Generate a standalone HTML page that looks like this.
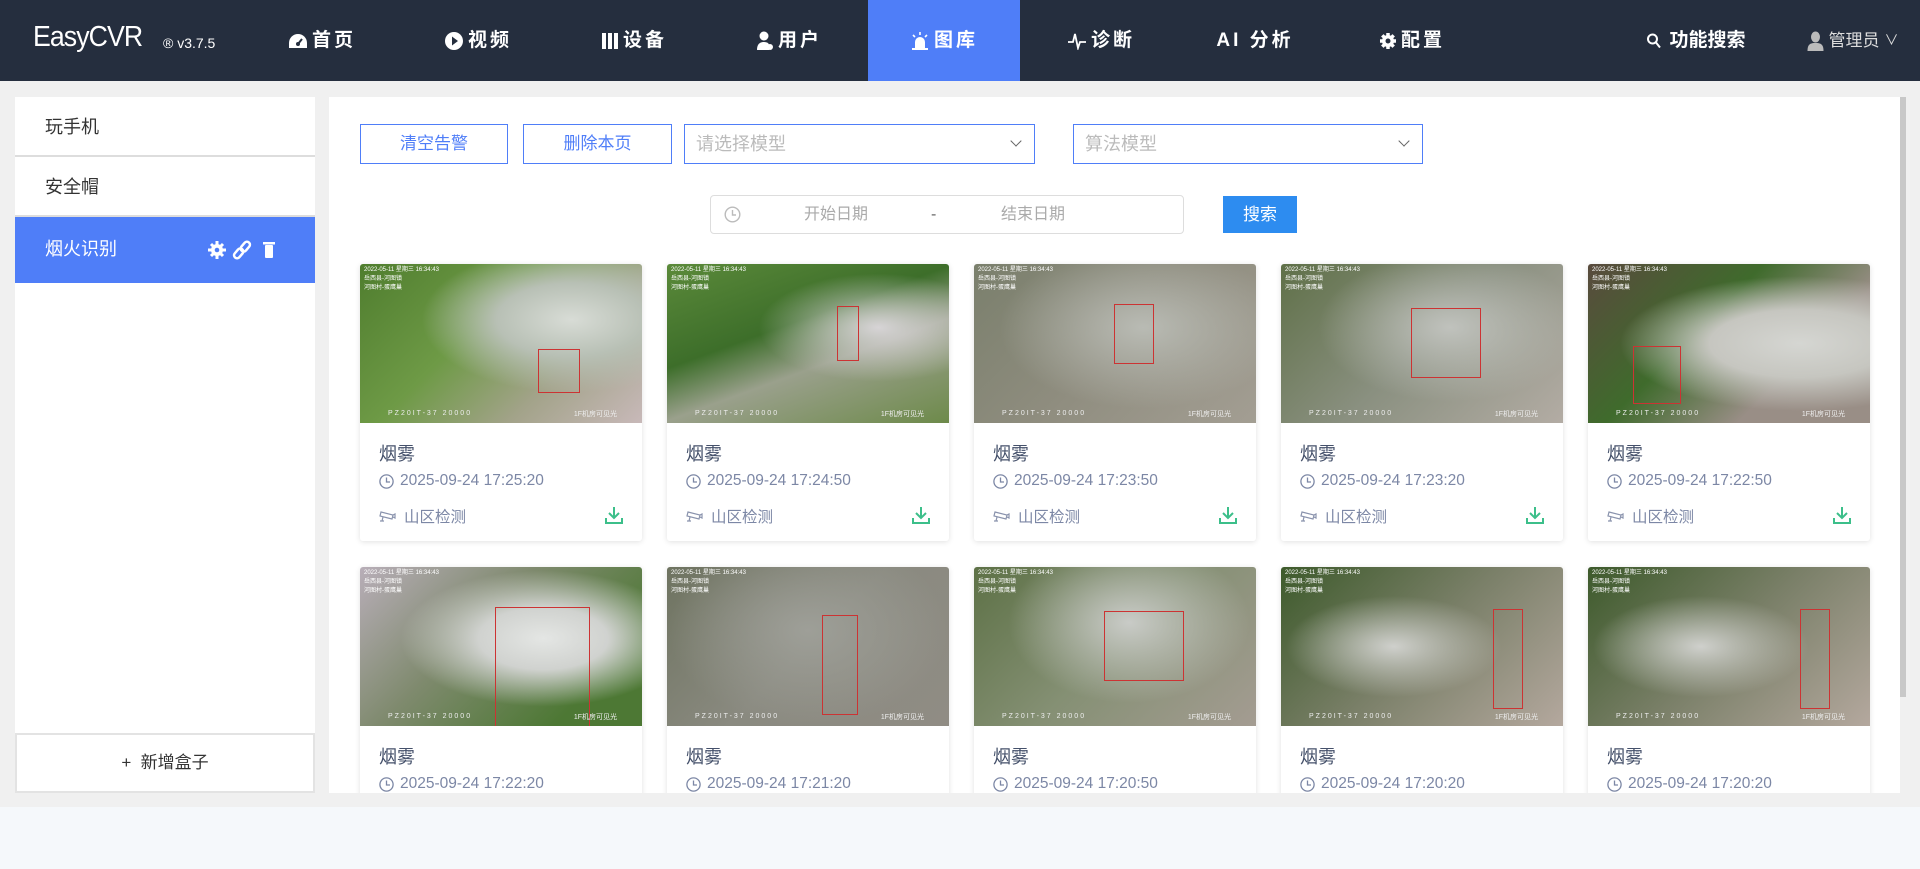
<!DOCTYPE html>
<html><head><meta charset="utf-8"><style>
*{margin:0;padding:0;box-sizing:border-box}
body{width:1920px;height:869px;overflow:hidden;background:#f5f8fb;font-family:"Liberation Sans","Noto Sans CJK SC",sans-serif;position:relative}
.hd{position:absolute;left:0;top:0;width:1920px;height:81px;background:#252e3e;color:#fff}
.logo{position:absolute;left:33px;top:21px;font-size:29px;letter-spacing:-1px;transform:scaleX(.92);transform-origin:left}
.ver{position:absolute;left:163px;top:35px;font-size:14px}
.nav{position:absolute;top:0;height:81px;line-height:81px;font-size:19px;font-weight:bold;letter-spacing:3px;transform:translateX(-50%);white-space:nowrap;display:flex;align-items:center;gap:4px}
.nav svg{display:block}
.act{position:absolute;left:868px;top:0;width:152px;height:81px;background:#4f7ef8}
.gray{position:absolute;left:0;top:81px;width:1920px;height:726px;background:#f0f0f0}
.side{position:absolute;left:15px;top:97px;width:300px;height:696px;background:#fff}
.it{height:60px;line-height:60px;padding-left:30px;font-size:18px;color:#333;border-bottom:2px solid #ddd}
.it.on{background:#4f7ef8;color:#fff;height:66px;line-height:64px;border-bottom:none;position:relative}
.add{position:absolute;left:0;bottom:0;width:300px;height:60px;border:2px solid #e3e3e3;text-align:center;line-height:56px;font-size:17px;color:#333}
.main{position:absolute;left:329px;top:97px;width:1571px;height:696px;background:#fff;overflow:hidden}
.sb{position:absolute;left:1900px;top:97px;width:6px;height:600px;background:#c8c8c8}
.btn{position:absolute;top:27px;height:40px;border:1px solid #4f7ef8;color:#4f7ef8;font-size:17px;text-align:center;line-height:38px}
.sel{position:absolute;top:27px;height:40px;border:1px solid #4f7ef8;color:#bbb;font-size:18px;line-height:38px;padding-left:11px}
.sel:after{content:"";position:absolute;right:14px;top:12px;width:7px;height:7px;border-right:1.5px solid #666;border-bottom:1.5px solid #666;transform:rotate(45deg)}
.date{position:absolute;left:381px;top:98px;width:474px;height:39px;border:1px solid #ddd;border-radius:4px;color:#aaa;font-size:16px;line-height:37px}
.srch{position:absolute;left:894px;top:99px;width:74px;height:37px;background:#2d8cf0;color:#fff;font-size:17px;text-align:center;line-height:37px}
.card{position:absolute;width:282px;height:277px;background:#fff;box-shadow:0 1px 6px rgba(0,0,0,.12);border-radius:3px;overflow:hidden}
.img{height:159px;position:relative;overflow:hidden}
.img .box{position:absolute;border:1px solid #c33}
.img .t{position:absolute;left:4px;top:2px;font-size:6px;color:#fff;line-height:9px}
.img .b{position:absolute;left:28px;bottom:6px;font-size:7px;color:#eee;letter-spacing:2px}
.img .r{position:absolute;right:25px;bottom:4px;font-size:7px;color:#eee}
.ttl{position:absolute;left:19px;top:176px;font-size:18px;color:#44506a}
.tm{position:absolute;left:19px;top:208px;font-size:15.5px;color:#7c87a5;display:flex;align-items:center;gap:6px}
.ar{position:absolute;left:19px;top:241px;font-size:15.5px;color:#7c87a5;display:flex;align-items:center;gap:8px}
.dl{position:absolute;right:18px;top:241px}
</style></head><body>
<div class="hd">
<div class="logo">EasyCVR</div><div class="ver">® v3.7.5</div>
<div class="act"></div>
<div class="nav" style="left:322px"><svg width="20" height="16" viewBox="0 0 20 16"><path d="M10 1a9 9 0 0 0-9 9v5h18v-5a9 9 0 0 0-9-9z" fill="#fff"/><path d="M10 11l4-5" stroke="#252e3e" stroke-width="2"/><circle cx="10" cy="11" r="2" fill="#252e3e"/></svg>首页</div>
<div class="nav" style="left:478px"><svg width="20" height="20" viewBox="0 0 20 20"><circle cx="10" cy="10" r="9" fill="#fff"/><path d="M8 5.5l6 4.5-6 4.5z" fill="#252e3e"/></svg>视频</div>
<div class="nav" style="left:634px"><svg width="18" height="18" viewBox="0 0 18 18" fill="#fff"><rect x="1" y="1" width="4" height="16"/><rect x="7" y="1" width="4" height="16"/><rect x="13" y="1" width="4" height="16"/></svg>设备</div>
<div class="nav" style="left:789px"><svg width="18" height="20" viewBox="0 0 18 20" fill="#fff"><circle cx="8" cy="5" r="4.5"/><path d="M1 19c0-6 3-8 7-8s5 2 5 3v5z"/><circle cx="14" cy="16" r="3"/></svg>用户</div>
<div class="nav" style="left:944px"><svg width="20" height="20" viewBox="0 0 20 20" fill="#fff"><path d="M5 18v-7a5 5 0 0 1 10 0v7z"/><rect x="2" y="17" width="16" height="2"/><path d="M10 1v3M3 4l2 2M17 4l-2 2" stroke="#fff" stroke-width="1.6"/></svg>图库</div>
<div class="nav" style="left:1101px"><svg width="20" height="18" viewBox="0 0 20 18" fill="none" stroke="#fff" stroke-width="1.8"><path d="M1 10h5l2-8 3 14 2-6h6"/></svg>诊断</div>
<div class="nav" style="left:1255px">AI 分析</div>
<div class="nav" style="left:1412px"><svg width="18" height="18" viewBox="0 0 18 18"><g stroke="#fff" stroke-width="3.5"><line x1="9" y1="1" x2="9" y2="17"/><line x1="1" y1="9" x2="17" y2="9"/><line x1="3.3" y1="3.3" x2="14.7" y2="14.7"/><line x1="14.7" y1="3.3" x2="3.3" y2="14.7"/></g><circle cx="9" cy="9" r="6" fill="#fff"/><circle cx="9" cy="9" r="2.5" fill="#252e3e"/></svg>配置</div>
<div class="nav" style="left:1696px;letter-spacing:0;gap:8px"><svg width="15" height="16" viewBox="0 0 15 16" fill="none" stroke="#fff" stroke-width="2"><circle cx="6" cy="6" r="4.5"/><path d="M9.5 9.5l4 5"/></svg>功能搜索</div>
<div class="nav" style="left:1853px;font-weight:normal;font-size:17px;letter-spacing:0;color:#ddd;gap:5px"><svg width="16" height="20" viewBox="0 0 16 20" fill="#bbb"><ellipse cx="8" cy="6" rx="4.5" ry="5.5"/><path d="M0 20c0-7 3-8 8-8s8 1 8 8z"/></svg>管理员 <span style="font-size:14px">∨</span></div>
</div>
<div class="gray"></div>
<div class="side">
<div class="it">玩手机</div>
<div class="it">安全帽</div>
<div class="it on">烟火识别
<svg style="position:absolute;left:193px;top:23px" width="70" height="20" viewBox="0 0 70 20" fill="#fff"><g stroke="#fff" stroke-width="3"><line x1="9" y1="1" x2="9" y2="19"/><line x1="0" y1="10" x2="18" y2="10"/><line x1="3" y1="4" x2="15" y2="16"/><line x1="15" y1="4" x2="3" y2="16"/></g><circle cx="9" cy="10" r="6"/><circle cx="9" cy="10" r="2.3" fill="#4f7ef8"/><g fill="none" stroke="#fff" stroke-width="2.5"><rect x="34" y="1" width="6" height="11" rx="3" transform="rotate(40 37 7)"/><rect x="28" y="8" width="6" height="11" rx="3" transform="rotate(40 31 13)"/></g><rect x="55" y="2" width="12" height="2.5"/><rect x="57" y="5" width="8" height="13" rx="1"/></svg></div>
<div class="add">+&nbsp;&nbsp;新增盒子</div>
</div>
<div class="main">
<div class="btn" style="left:31px;width:148px">清空告警</div>
<div class="btn" style="left:194px;width:149px">删除本页</div>
<div class="sel" style="left:355px;width:351px">请选择模型</div>
<div class="sel" style="left:744px;width:350px">算法模型</div>
<div class="date"><svg style="position:absolute;left:13px;top:10px" width="17" height="17" viewBox="0 0 17 17" fill="none" stroke="#bbb" stroke-width="1.4"><circle cx="8.5" cy="8.5" r="7.3"/><path d="M8.5 4v5h3.5"/></svg><span style="position:absolute;left:93px">开始日期</span><span style="position:absolute;left:220px;color:#666">-</span><span style="position:absolute;left:290px">结束日期</span></div>
<div class="srch">搜索</div>
<div id="cards"></div>
</div>
<div class="sb"></div>
<script>
var times=["17:25:20","17:24:50","17:23:50","17:23:20","17:22:50","17:22:20","17:21:20","17:20:50","17:20:20","17:20:20"];
var bgs=["radial-gradient(ellipse at 75% 35%,#d8dcd6 0,#b8c0b5 25%,transparent 50%),linear-gradient(135deg,#4f7d2e,#6e9a46 40%,#a3a38a 70%,#c8b9b9)",
"radial-gradient(ellipse at 75% 40%,#d7d4d6 0,transparent 40%),linear-gradient(160deg,#5b8a3a,#3d6e2a 40%,#9aa08c 60%,#6d8a4a)",
"radial-gradient(ellipse at 60% 40%,#b9bbb4 0,transparent 60%),linear-gradient(135deg,#7a7f6c,#8f8d7f 50%,#a39e93)",
"radial-gradient(ellipse at 60% 40%,#c0c2bd 0,transparent 55%),linear-gradient(135deg,#5f7048,#8a9080 50%,#b3aca4)",
"radial-gradient(ellipse at 75% 50%,#d5d6d2 0,#c6c6c0 30%,transparent 60%),linear-gradient(135deg,#594a3d,#3f6b2c 40%,#998e86 70%)",
"radial-gradient(ellipse at 65% 45%,#e4e6e4 0,#d0d2cf 25%,transparent 55%),linear-gradient(135deg,#b8aeb8,#7f8a6e 40%,#4d7834 80%)",
"radial-gradient(ellipse at 50% 40%,#9e9f98 0,transparent 70%),linear-gradient(135deg,#6e7360,#8a8a80 50%,#908c84)",
"radial-gradient(ellipse at 55% 35%,#c9cbc7 0,transparent 55%),linear-gradient(135deg,#5d7146,#859074 50%,#a49c92)",
"radial-gradient(ellipse at 40% 50%,#cfd0cc 0,transparent 45%),linear-gradient(135deg,#3d5a2b,#7b8069 50%,#b4a89e)",
"radial-gradient(ellipse at 40% 50%,#cfd0cc 0,transparent 45%),linear-gradient(135deg,#3d5a2b,#7b8069 50%,#b4a89e)"];
var boxes=[[178,85,42,44],[170,42,22,55],[140,40,40,60],[130,44,70,70],[45,82,48,58],[135,40,95,120],[155,48,36,100],[130,44,80,70],[212,42,30,100],[212,42,30,100]];
var clock='<svg width="15" height="15" viewBox="0 0 15 15" fill="none" stroke="#7c87a5" stroke-width="1.3"><circle cx="7.5" cy="7.5" r="6.6"/><path d="M7.5 3.5v4.5h3.5"/></svg>';
var cam='<svg width="17" height="14" viewBox="0 0 17 14" fill="none" stroke="#8a93ad" stroke-width="1.2"><path d="M2 3l12 3-1 4-12-3z"/><path d="M4 8l-1 4M1 12h4M14 6l2-1v4l-2-1"/></svg>';
var h="";
for(var i=0;i<10;i++){var c=i%5,r=Math.floor(i/5);var x=31+c*307,y=167+r*303;var b=boxes[i];
h+='<div class="card" style="left:'+x+'px;top:'+y+'px"><div class="img" style="background:'+bgs[i]+'"><div class="t">2022-05-11 星期三 16:34:43<br>岳西县-河图镇<br>河图村-蛋鹰巢</div><div class="box" style="left:'+b[0]+'px;top:'+b[1]+'px;width:'+b[2]+'px;height:'+b[3]+'px"></div><div class="b">PZ20IT-37 20000</div><div class="r">1F机房可见光</div></div>'+
'<div class="ttl">烟雾</div><div class="tm">'+clock+'2025-09-24 '+times[i]+'</div><div class="ar">'+cam+'山区检测</div>'+
'<svg class="dl" width="20" height="20" viewBox="0 0 20 20" fill="none" stroke="#3cbf8a" stroke-width="2"><path d="M10 2v11M5 8l5 5 5-5M2 13v5h16v-5"/></svg></div>';}
document.getElementById("cards").innerHTML=h;
</script>
</body></html>
